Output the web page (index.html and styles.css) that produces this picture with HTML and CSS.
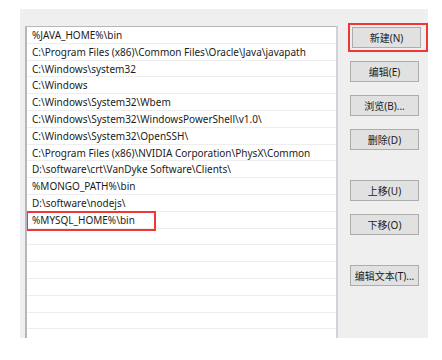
FILE: index.html
```html
<!DOCTYPE html>
<html lang="zh-CN">
<head>
  <meta charset="UTF-8" />
  <meta name="viewport" content="width=device-width, initial-scale=1.0" />
  <title>编辑环境变量</title>
  <link rel="stylesheet" href="styles.css">
</head>
<body>
  <div class="dialog">
    <div class="path-list">
      <div class="row">%JAVA_HOME%\bin</div>
      <div class="row">C:\Program Files (x86)\Common Files\Oracle\Java\javapath</div>
      <div class="row">C:\Windows\system32</div>
      <div class="row">C:\Windows</div>
      <div class="row">C:\Windows\System32\Wbem</div>
      <div class="row">C:\Windows\System32\WindowsPowerShell\v1.0\</div>
      <div class="row">C:\Windows\System32\OpenSSH\</div>
      <div class="row">C:\Program Files (x86)\NVIDIA Corporation\PhysX\Common</div>
      <div class="row">D:\software\crt\VanDyke Software\Clients\</div>
      <div class="row">%MONGO_PATH%\bin</div>
      <div class="row">D:\software\nodejs\</div>
      <div class="row marked">%MYSQL_HOME%\bin</div>
      <div class="row"></div>
      <div class="row"></div>
      <div class="row"></div>
      <div class="row"></div>
      <div class="row"></div>
      <div class="row"></div>
      <div class="row"></div>
    </div>

    <div class="actions">
      <div class="highlight">
        <button>新建(N)</button>
      </div>
      <button>编辑(E)</button>
      <button>浏览(B)...</button>
      <button>删除(D)</button>
      <button class="btn-group">上移(U)</button>
      <button>下移(O)</button>
      <button class="btn-group">编辑文本(T)...</button>
    </div>
  </div>
</body>
</html>
```

FILE: styles.css
```css
body {
  margin: 0;
  background: #fff;
  font-family: 'Noto Sans', 'Noto Sans CJK SC', sans-serif;
  color: #1b1b1b;
}

.dialog {
  display: flex;
  align-items: flex-start;
  width: 408px;
  height: 329px;
  margin: 9px 0 0 20px;
  padding-left: 5px;
  box-sizing: border-box;
  background: #efefef;
  overflow: hidden;
}

.path-list {
  position: relative;
  width: 313px;
  height: 312px;
  margin-top: 17px;
  box-sizing: border-box;
  background: #fff;
  border-top: 1px solid #b8b8b8;
  border-left: 2px solid #b6b6be;
  border-right: 2px solid #d2d2da;
  overflow: hidden;
}

.row {
  position: relative;
  height: 16.8px;
  line-height: 16px;
  box-sizing: border-box;
  padding-left: 5px;
  border-bottom: 1px solid #eeeeee;
  font-size: 10px;
  white-space: nowrap;
}

.row.marked::after {
  content: '';
  position: absolute;
  left: -1px;
  top: -1px;
  width: 130px;
  height: 20px;
  box-sizing: border-box;
  border: 2px solid #f23535;
}

.actions {
  display: flex;
  flex-direction: column;
  align-items: flex-start;
  margin-left: 10px;
  padding-top: 14px;
}

.highlight {
  display: flex;
  padding: 2px 5px 2px 2px;
  border: 2px solid #f23535;
  margin-bottom: 9px;
}

button {
  display: block;
  width: 69px;
  height: 21px;
  margin: 0 0 13px 2px;
  padding: 0;
  font-family: 'Noto Sans', 'Noto Sans CJK SC', sans-serif;
  font-size: 10px;
  color: #1b1b1b;
  background: #e1e1e1;
  border: 1px solid #adadad;
}

.highlight button {
  margin: 0;
}

.btn-group {
  margin-top: 17px;
}
```
